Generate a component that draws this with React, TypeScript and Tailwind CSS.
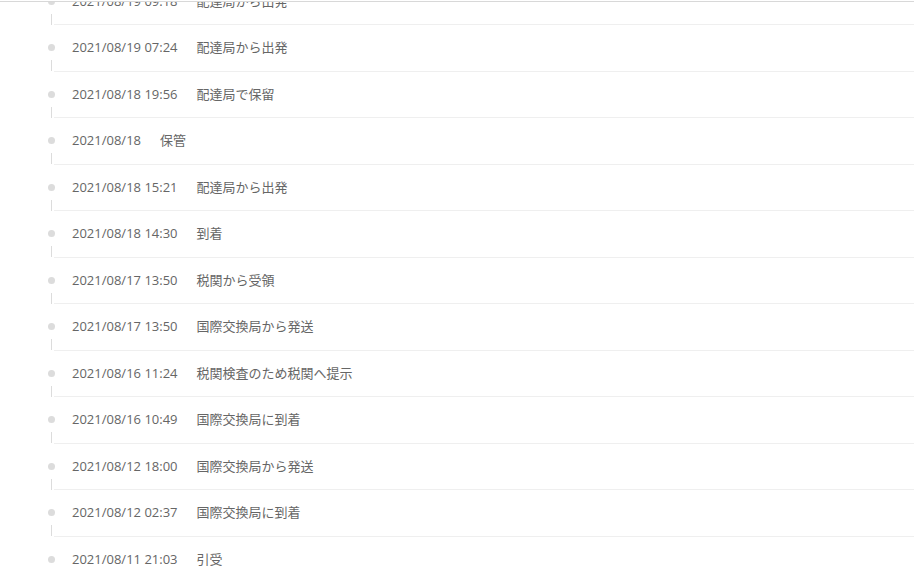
import React from "react";

const rows: [string, string][] = [
  ["2021/08/19 09:18", "配達局から出発"],
  ["2021/08/19 07:24", "配達局から出発"],
  ["2021/08/18 19:56", "配達局で保留"],
  ["2021/08/18", "保管"],
  ["2021/08/18 15:21", "配達局から出発"],
  ["2021/08/18 14:30", "到着"],
  ["2021/08/17 13:50", "税関から受領"],
  ["2021/08/17 13:50", "国際交換局から発送"],
  ["2021/08/16 11:24", "税関検査のため税関へ提示"],
  ["2021/08/16 10:49", "国際交換局に到着"],
  ["2021/08/12 18:00", "国際交換局から発送"],
  ["2021/08/12 02:37", "国際交換局に到着"],
  ["2021/08/11 21:03", "引受"],
];

export default function App() {
  return (
    <div
      className="relative w-[914px] h-[570px] overflow-hidden bg-white text-[13px] text-[#666]"
      style={{ fontFamily: '"Open Sans", "Noto Sans CJK JP", "Noto Sans", sans-serif' }}
    >
      <ul className="-mt-[21.5px]">
        {rows.map(([date, desc], i) => (
          <li key={i} className="relative h-[46.5px] pl-[54px]">
            <span className="absolute left-[48px] top-[19px] h-[7px] w-[7px] rounded-full bg-[#dcdcdc]" />
            <span className="absolute left-[51px] top-[35px] h-[11px] w-px bg-[#dcdcdc]" />
            <div className="flex h-full items-center border-b border-[#efefef] pl-[18px]">
              <span>{date}</span>
              <span className="ml-[19px]">{desc}</span>
            </div>
          </li>
        ))}
      </ul>
      <div className="absolute left-0 right-0 top-0 h-[2px] border-b border-[#d8d8d8] bg-white" />
    </div>
  );
}
